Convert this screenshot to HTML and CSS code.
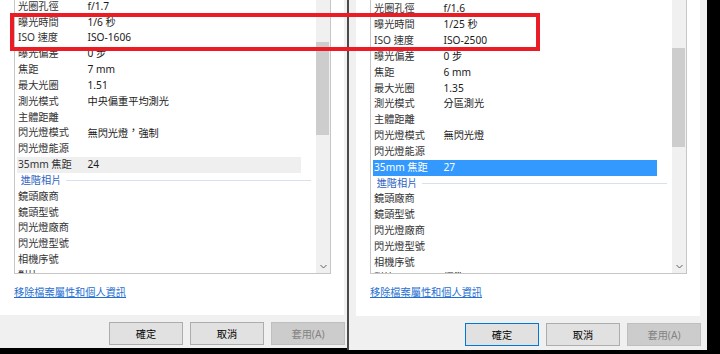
FILE: index.html
```html
<!DOCTYPE html>
<html lang="zh-Hant">
<head>
    <meta charset="UTF-8">
    <meta name="viewport" content="width=device-width, initial-scale=1.0">
    <title>內容 - 詳細資料</title>

    <link rel="stylesheet" href="styles.css">
</head>
<body>

    <div class="screen">

        <!-- Dialog kiri -->
        <div class="dialog dialog-left">
            <div class="page">
                <div class="listbox">
                    <div class="rows rows-left">
                        <div class="row"><span class="name">光圈孔徑</span><span class="value">f/1.7</span></div>
                        <div class="row"><span class="name">曝光時間</span><span class="value">1/6 秒</span></div>
                        <div class="row"><span class="name">ISO 速度</span><span class="value">ISO-1606</span></div>
                        <div class="row"><span class="name">曝光偏差</span><span class="value">0 步</span></div>
                        <div class="row"><span class="name">焦距</span><span class="value">7 mm</span></div>
                        <div class="row"><span class="name">最大光圈</span><span class="value">1.51</span></div>
                        <div class="row"><span class="name">測光模式</span><span class="value">中央偏重平均測光</span></div>
                        <div class="row"><span class="name">主體距離</span><span class="value"></span></div>
                        <div class="row"><span class="name">閃光燈模式</span><span class="value">無閃光燈<span class="punct">，</span>強制</span></div>
                        <div class="row"><span class="name">閃光燈能源</span><span class="value"></span></div>
                        <div class="row row-hover"><span class="name">35mm 焦距</span><span class="value">24</span></div>
                        <div class="group"><span>進階相片</span><i></i></div>
                        <div class="row"><span class="name">鏡頭廠商</span><span class="value"></span></div>
                        <div class="row"><span class="name">鏡頭型號</span><span class="value"></span></div>
                        <div class="row"><span class="name">閃光燈廠商</span><span class="value"></span></div>
                        <div class="row"><span class="name">閃光燈型號</span><span class="value"></span></div>
                        <div class="row"><span class="name">相機序號</span><span class="value"></span></div>
                        <div class="row"><span class="name">對比</span><span class="value"></span></div>
                    </div>
                    <div class="scrollbar">
                        <div class="thumb thumb-left"></div>
                        <div class="arrow">
                            <svg width="7" height="5" viewBox="0 0 7 5"><path d="M0.5 1 L3.5 4 L6.5 1" fill="none" stroke="#606060" stroke-width="1"/></svg>
                        </div>
                    </div>
                </div>
                <a class="link" href="#">移除檔案屬性和個人資訊</a>
            </div>
            <div class="buttons">
                <button>確定</button>
                <button>取消</button>
                <button disabled>套用(A)</button>
            </div>
        </div>

        <!-- Dialog kanan -->
        <div class="dialog dialog-right">
            <div class="page">
                <div class="listbox">
                    <div class="rows rows-right">
                        <div class="row"><span class="name">光圈孔徑</span><span class="value">f/1.6</span></div>
                        <div class="row"><span class="name">曝光時間</span><span class="value">1/25 秒</span></div>
                        <div class="row"><span class="name">ISO 速度</span><span class="value">ISO-2500</span></div>
                        <div class="row"><span class="name">曝光偏差</span><span class="value">0 步</span></div>
                        <div class="row"><span class="name">焦距</span><span class="value">6 mm</span></div>
                        <div class="row"><span class="name">最大光圈</span><span class="value">1.35</span></div>
                        <div class="row"><span class="name">測光模式</span><span class="value">分區測光</span></div>
                        <div class="row"><span class="name">主體距離</span><span class="value"></span></div>
                        <div class="row"><span class="name">閃光燈模式</span><span class="value">無閃光燈</span></div>
                        <div class="row"><span class="name">閃光燈能源</span><span class="value"></span></div>
                        <div class="row row-selected"><span class="name">35mm 焦距</span><span class="value">27</span></div>
                        <div class="group"><span>進階相片</span><i></i></div>
                        <div class="row"><span class="name">鏡頭廠商</span><span class="value"></span></div>
                        <div class="row"><span class="name">鏡頭型號</span><span class="value"></span></div>
                        <div class="row"><span class="name">閃光燈廠商</span><span class="value"></span></div>
                        <div class="row"><span class="name">閃光燈型號</span><span class="value"></span></div>
                        <div class="row"><span class="name">相機序號</span><span class="value"></span></div>
                        <div class="row"><span class="name">對比</span><span class="value">標準</span></div>
                    </div>
                    <div class="scrollbar">
                        <div class="thumb thumb-right"></div>
                        <div class="arrow">
                            <svg width="7" height="5" viewBox="0 0 7 5"><path d="M0.5 1 L3.5 4 L6.5 1" fill="none" stroke="#606060" stroke-width="1"/></svg>
                        </div>
                    </div>
                </div>
                <a class="link" href="#">移除檔案屬性和個人資訊</a>
            </div>
            <div class="buttons">
                <button class="default">確定</button>
                <button>取消</button>
                <button disabled>套用(A)</button>
            </div>
        </div>

        <!-- Kotak merah -->
        <div class="callout"></div>
    </div>

</body>
</html>
```

FILE: styles.css
```css
* {
    margin: 0;
    padding: 0;
    box-sizing: border-box;
}

body {
    font-family: 'Noto Sans', 'Noto Sans CJK TC', sans-serif;
    font-size: 10.2px;
    background-color: #000000;
    overflow: hidden;
}

.screen {
    position: relative;
    display: flex;
    align-items: flex-start;
    width: 720px;
    height: 354px;
    overflow: hidden;
}

/* Dialog */
.dialog {
    display: flex;
    flex-direction: column;
    flex-shrink: 0;
    width: 358px;
    padding-left: 7px;
    background-color: #f0f0f0;
}

.dialog-left {
    margin-left: -7px;
    height: 348px;
}

.dialog-right {
    position: relative;
    margin-left: -4px;
    width: 360px;
    height: 350px;
    border-left: 2px solid #4a4a4a;
}

.page {
    display: flex;
    flex-direction: column;
    width: 344px;
    height: 315px;
    background-color: #ffffff;
}

.dialog-right .page {
    height: 316px;
}

/* List */
.listbox {
    display: flex;
    width: 317px;
    height: 294px;
    margin-top: -20px;
    margin-left: 14px;
    border: 1px solid #c6c6c6;
}

.rows {
    flex: 1;
    overflow: hidden;
    padding-left: 2px;
}

.rows-left {
    padding-top: 17.8px;
}

.rows-right {
    padding-top: 20.4px;
}

.row {
    display: flex;
    align-items: center;
    width: 284px;
    height: 15.84px;
    padding-left: 1px;
    line-height: 15.84px;
    white-space: nowrap;
}

.row .name {
    width: 69.5px;
    flex-shrink: 0;
    color: #333333;
}

.row .value {
    color: #1a1a1a;
}

.punct {
    display: inline-block;
    vertical-align: 3px;
    line-height: 10px;
}

.row-hover {
    background-color: #efefef;
}

.row-selected {
    background-color: #3399ff;
}

.row-selected .name,
.row-selected .value {
    color: #ffffff;
}

.group {
    display: flex;
    align-items: center;
    width: 294px;
    height: 15.84px;
    padding-left: 3.7px;
    line-height: 15.84px;
    color: #2f63c2;
}

.group i {
    flex: 1;
    height: 1px;
    margin-left: 5px;
    background-color: #d6e0ee;
}

/* Scrollbar */
.scrollbar {
    display: flex;
    flex-direction: column;
    width: 14px;
    background-color: #f0f0f0;
}

.thumb {
    width: 13px;
    background-color: #cdcdcd;
}

.thumb-left {
    margin-top: 61px;
    height: 93px;
}

.thumb-right {
    margin-top: 67px;
    height: 99px;
}

.arrow {
    display: flex;
    align-items: center;
    justify-content: center;
    height: 14px;
    margin-top: auto;
}

.link {
    margin-top: 11px;
    margin-left: 14px;
    line-height: 14px;
    color: #1f6fd0;
    text-decoration: underline;
}

/* Buttons */
.buttons {
    display: flex;
    justify-content: flex-end;
    gap: 7px;
    padding-top: 7px;
    padding-right: 6px;
}

.buttons button {
    width: 74px;
    height: 23px;
    font-family: 'Noto Sans', 'Noto Sans CJK TC', sans-serif;
    font-size: 10.2px;
    color: #000000;
    background-color: #e1e1e1;
    border: 1px solid #adadad;
}

.buttons button.default {
    border-color: #0078d7;
}

.buttons button:disabled {
    color: #838383;
    background-color: #cccccc;
    border-color: #bfbfbf;
}

/* Red callout */
.callout {
    position: absolute;
    left: 10px;
    top: 13px;
    width: 530px;
    height: 38px;
    border: 4px solid #ec1c24;
}
```
